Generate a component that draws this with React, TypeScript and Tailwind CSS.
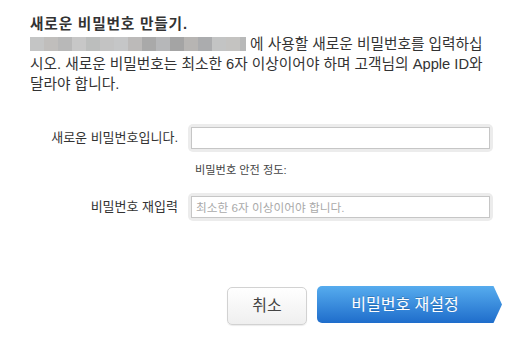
import React from 'react';

const mosaic = [
  '#c4c5c5', '#c0bebc', '#b8b8b8', '#c7c7c7', '#bcbebd', '#c3c3c3', '#c5c6c7', '#bcbab9',
  '#a9a9a9', '#b6b7b9', '#a4a4a4', '#b7b5b3', '#abacae', '#c3c4c4', '#c4c3c1', '#b8b9b9',
];

function Field({ label, placeholder }: { label: string; placeholder?: string }) {
  return (
    <div className="flex items-center">
      <label className="w-[148px] whitespace-nowrap text-right text-[13px] text-[#333]">{label}</label>
      <div className="ml-[10px] w-[305px] rounded-[5px] bg-[#ececec] p-[3px]">
        <input
          type="text"
          placeholder={placeholder}
          className="block h-[22px] w-full border border-[#c6c6c6] bg-white px-[4px] text-[11.7px] text-[#333] outline-none placeholder:text-[#aaa]"
        />
      </div>
    </div>
  );
}

export default function App() {
  return (
    <div
      className="h-[338px] w-[531px] bg-white pl-[30px] pt-[14px] text-[#333]"
      style={{ fontFamily: '"Liberation Sans", "Noto Sans CJK KR", sans-serif' }}
    >
      <div className="whitespace-nowrap text-[14.7px] leading-[20px]">
        <div className="font-bold tracking-[0.8px]">새로운 비밀번호 만들기.</div>
        <div>
          <span className="inline-flex h-[14px] align-[-2px]">
            {mosaic.map((c, i) => (
              <span
                key={i}
                className={i === mosaic.length - 1 ? 'h-full w-[6px]' : 'h-full w-[14px]'}
                style={{ backgroundColor: c }}
              />
            ))}
          </span>{' '}
          에 사용할 새로운 비밀번호를 입력하십
        </div>
        <div>시오. 새로운 비밀번호는 최소한 6자 이상이어야 하며 고객님의 Apple ID와</div>
        <div>달라야 합니다.</div>
      </div>

      <div className="mt-[30px]">
        <Field label="새로운 비밀번호입니다." />
        <div className="ml-[165px] mt-[11px] text-[11.2px] leading-[14px] text-[#444]">비밀번호 안전 정도:</div>
        <div className="mt-[16px]">
          <Field label="비밀번호 재입력" placeholder="최소한 6자 이상이어야 합니다." />
        </div>
      </div>

      <div className="mt-[65px] flex items-start justify-end pr-[29px]">
        <button className="mt-[1px] h-[38px] w-[80px] rounded-[5px] border border-[#d2d2d2] bg-gradient-to-b from-white to-[#efefef] text-[16px] text-[#444] shadow-[0_1px_1px_rgba(0,0,0,0.08)]">
          취소
        </button>
        <button className="ml-[10px] flex h-[37px]">
          <span className="flex h-full w-[176px] items-center justify-center rounded-l-[5px] bg-gradient-to-b from-[#56acee] to-[#1f6dcb] text-[16px] text-white [text-shadow:0_-1px_0_rgba(0,0,0,0.2)]">
            비밀번호 재설정
          </span>
          <svg width="9" height="37" viewBox="0 0 9 37" className="block">
            <defs>
              <linearGradient id="bl" x1="0" y1="0" x2="0" y2="1">
                <stop offset="0" stopColor="#56acee" />
                <stop offset="1" stopColor="#1f6dcb" />
              </linearGradient>
            </defs>
            <polygon points="0,0 0.5,0 9,18.5 0.5,37 0,37" fill="url(#bl)" />
          </svg>
        </button>
      </div>
    </div>
  );
}
